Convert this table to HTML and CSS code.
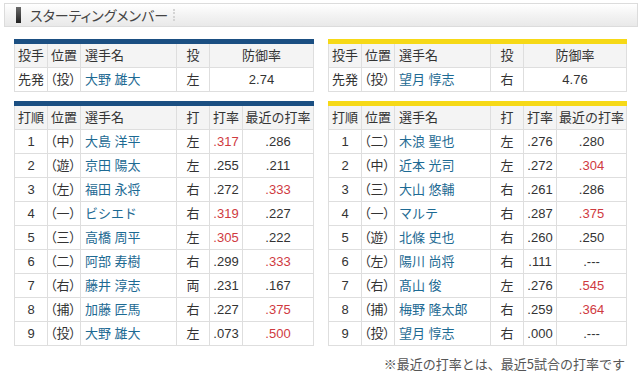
FILE: index.html
```html
<!DOCTYPE html>
<html lang="ja">
<head>
<meta charset="utf-8">
<link rel="stylesheet" href="styles.css">
</head>
<body>
<div class="title-bar">
  <span class="title-mark"></span>
  <span class="title-text">スターティングメンバー</span>
  <span class="title-dots"></span>
</div>

<div class="teams">
  <div class="team">
    <table class="tbl top blue">
      <colgroup><col class="c1"><col class="c2"><col class="c3"><col class="c4"><col></colgroup>
      <tr class="head"><th class="l">投手</th><th class="l">位置</th><th class="l n">選手名</th><th>投</th><th>防御率</th></tr>
      <tr><td class="l">先発</td><td class="l p">（投）</td><td class="name">大野 雄大</td><td>左</td><td>2.74</td></tr>
    </table>
    <table class="tbl lineup blue">
      <colgroup><col class="c1"><col class="c2"><col class="c3"><col class="c4"><col class="c5"><col></colgroup>
      <tr class="head"><th class="l">打順</th><th class="l">位置</th><th class="l n">選手名</th><th>打</th><th>打率</th><th>最近の打率</th></tr>
      <tr><td>1</td><td class="l p">（中）</td><td class="name">大島 洋平</td><td>左</td><td class="red">.317</td><td>.286</td></tr>
      <tr><td>2</td><td class="l p">（遊）</td><td class="name">京田 陽太</td><td>左</td><td>.255</td><td>.211</td></tr>
      <tr><td>3</td><td class="l p">（左）</td><td class="name">福田 永将</td><td>右</td><td>.272</td><td class="red">.333</td></tr>
      <tr><td>4</td><td class="l p">（一）</td><td class="name">ビシエド</td><td>右</td><td class="red">.319</td><td>.227</td></tr>
      <tr><td>5</td><td class="l p">（三）</td><td class="name">高橋 周平</td><td>左</td><td class="red">.305</td><td>.222</td></tr>
      <tr><td>6</td><td class="l p">（二）</td><td class="name">阿部 寿樹</td><td>右</td><td>.299</td><td class="red">.333</td></tr>
      <tr><td>7</td><td class="l p">（右）</td><td class="name">藤井 淳志</td><td>両</td><td>.231</td><td>.167</td></tr>
      <tr><td>8</td><td class="l p">（捕）</td><td class="name">加藤 匠馬</td><td>右</td><td>.227</td><td class="red">.375</td></tr>
      <tr><td>9</td><td class="l p">（投）</td><td class="name">大野 雄大</td><td>左</td><td>.073</td><td class="red">.500</td></tr>
    </table>
  </div>

  <div class="team right">
    <table class="tbl top yellow">
      <colgroup><col class="c1"><col class="c2"><col class="c3"><col class="c4"><col></colgroup>
      <tr class="head"><th class="l">投手</th><th class="l">位置</th><th class="l n">選手名</th><th>投</th><th>防御率</th></tr>
      <tr><td class="l">先発</td><td class="l p">（投）</td><td class="name">望月 惇志</td><td>右</td><td>4.76</td></tr>
    </table>
    <table class="tbl lineup yellow">
      <colgroup><col class="c1"><col class="c2"><col class="c3"><col class="c4"><col class="c5"><col></colgroup>
      <tr class="head"><th class="l">打順</th><th class="l">位置</th><th class="l n">選手名</th><th>打</th><th>打率</th><th>最近の打率</th></tr>
      <tr><td>1</td><td class="l p">（二）</td><td class="name">木浪 聖也</td><td>左</td><td>.276</td><td>.280</td></tr>
      <tr><td>2</td><td class="l p">（中）</td><td class="name">近本 光司</td><td>左</td><td>.272</td><td class="red">.304</td></tr>
      <tr><td>3</td><td class="l p">（三）</td><td class="name">大山 悠輔</td><td>右</td><td>.261</td><td>.286</td></tr>
      <tr><td>4</td><td class="l p">（一）</td><td class="name">マルテ</td><td>右</td><td>.287</td><td class="red">.375</td></tr>
      <tr><td>5</td><td class="l p">（遊）</td><td class="name">北條 史也</td><td>右</td><td>.260</td><td>.250</td></tr>
      <tr><td>6</td><td class="l p">（左）</td><td class="name">陽川 尚将</td><td>右</td><td>.111</td><td>.---</td></tr>
      <tr><td>7</td><td class="l p">（右）</td><td class="name">髙山 俊</td><td>左</td><td>.276</td><td class="red">.545</td></tr>
      <tr><td>8</td><td class="l p">（捕）</td><td class="name">梅野 隆太郎</td><td>右</td><td>.259</td><td class="red">.364</td></tr>
      <tr><td>9</td><td class="l p">（投）</td><td class="name">望月 惇志</td><td>右</td><td>.000</td><td>.---</td></tr>
    </table>
    <p class="note">※最近の打率とは、最近5試合の打率です</p>
  </div>
</div>
</body>
</html>
```

FILE: styles.css
```css
html, body {
  margin: 0;
  padding: 0;
  background: #fff;
}
body {
  font-family: "Liberation Sans", "Noto Sans CJK JP", sans-serif;
  font-size: 13px;
  color: #333;
}
.title-bar {
  margin: 3px 4px 0 4px;
  height: 22px;
  border: 1px solid #dcdcdc;
  background: linear-gradient(#ffffff, #f3f3f3 50%, #e9e9e9);
  display: flex;
  align-items: center;
  box-sizing: content-box;
}
.title-mark {
  width: 5px;
  height: 16px;
  margin-left: 11px;
  margin-right: 9px;
  background: linear-gradient(#6a6a6a, #222);
}
.title-text {
  font-family: "Noto Sans CJK JP", sans-serif;
  font-size: 14px;
  color: #444;
  font-feature-settings: "palt";
}
.title-dots {
  width: 0;
  height: 12px;
  margin-left: 5px;
  border-left: 2px dotted #d4d4d4;
}
.teams {
  display: flex;
  gap: 14px;
  padding-left: 14px;
  margin-top: 12px;
}
.team {
  width: 300px;
}
.team.right {
  width: 299px;
}
.tbl {
  width: 100%;
  table-layout: fixed;
  border-collapse: collapse;
}
.tbl.blue { border-top: 5px solid #1b4f82; }
.tbl.yellow { border-top: 5px solid #f6d917; }
.tbl.top { margin-bottom: 9px; }
col.c1, col.c2, col.c4, col.c5 { width: 33px; }
col.c3 { width: 96px; }
.tbl th, .tbl td {
  border: 1px solid #dedede;
  height: 23px;
  padding: 0;
  text-align: center;
  font-weight: normal;
  white-space: nowrap;
  overflow: hidden;
  line-height: 22px;
}
.tbl tr.head th {
  background: #f4f4f4;
  color: #333;
}
.tbl .l {
  text-align: left;
  padding-left: 3px;
}
.tbl .p {
  padding-left: 2px;
  font-feature-settings: "palt";
}
.tbl .n {
  padding-left: 4px;
}
.tbl td.name {
  text-align: left;
  padding-left: 4px;
  color: #1d6a93;
}
.tbl td.red {
  color: #cf3a3f;
}
.note {
  margin: 11px 2px 0 0;
  text-align: right;
  color: #555;
  font-size: 13px;
  font-family: "Noto Sans CJK JP", sans-serif;
  line-height: 14px;
}
```
